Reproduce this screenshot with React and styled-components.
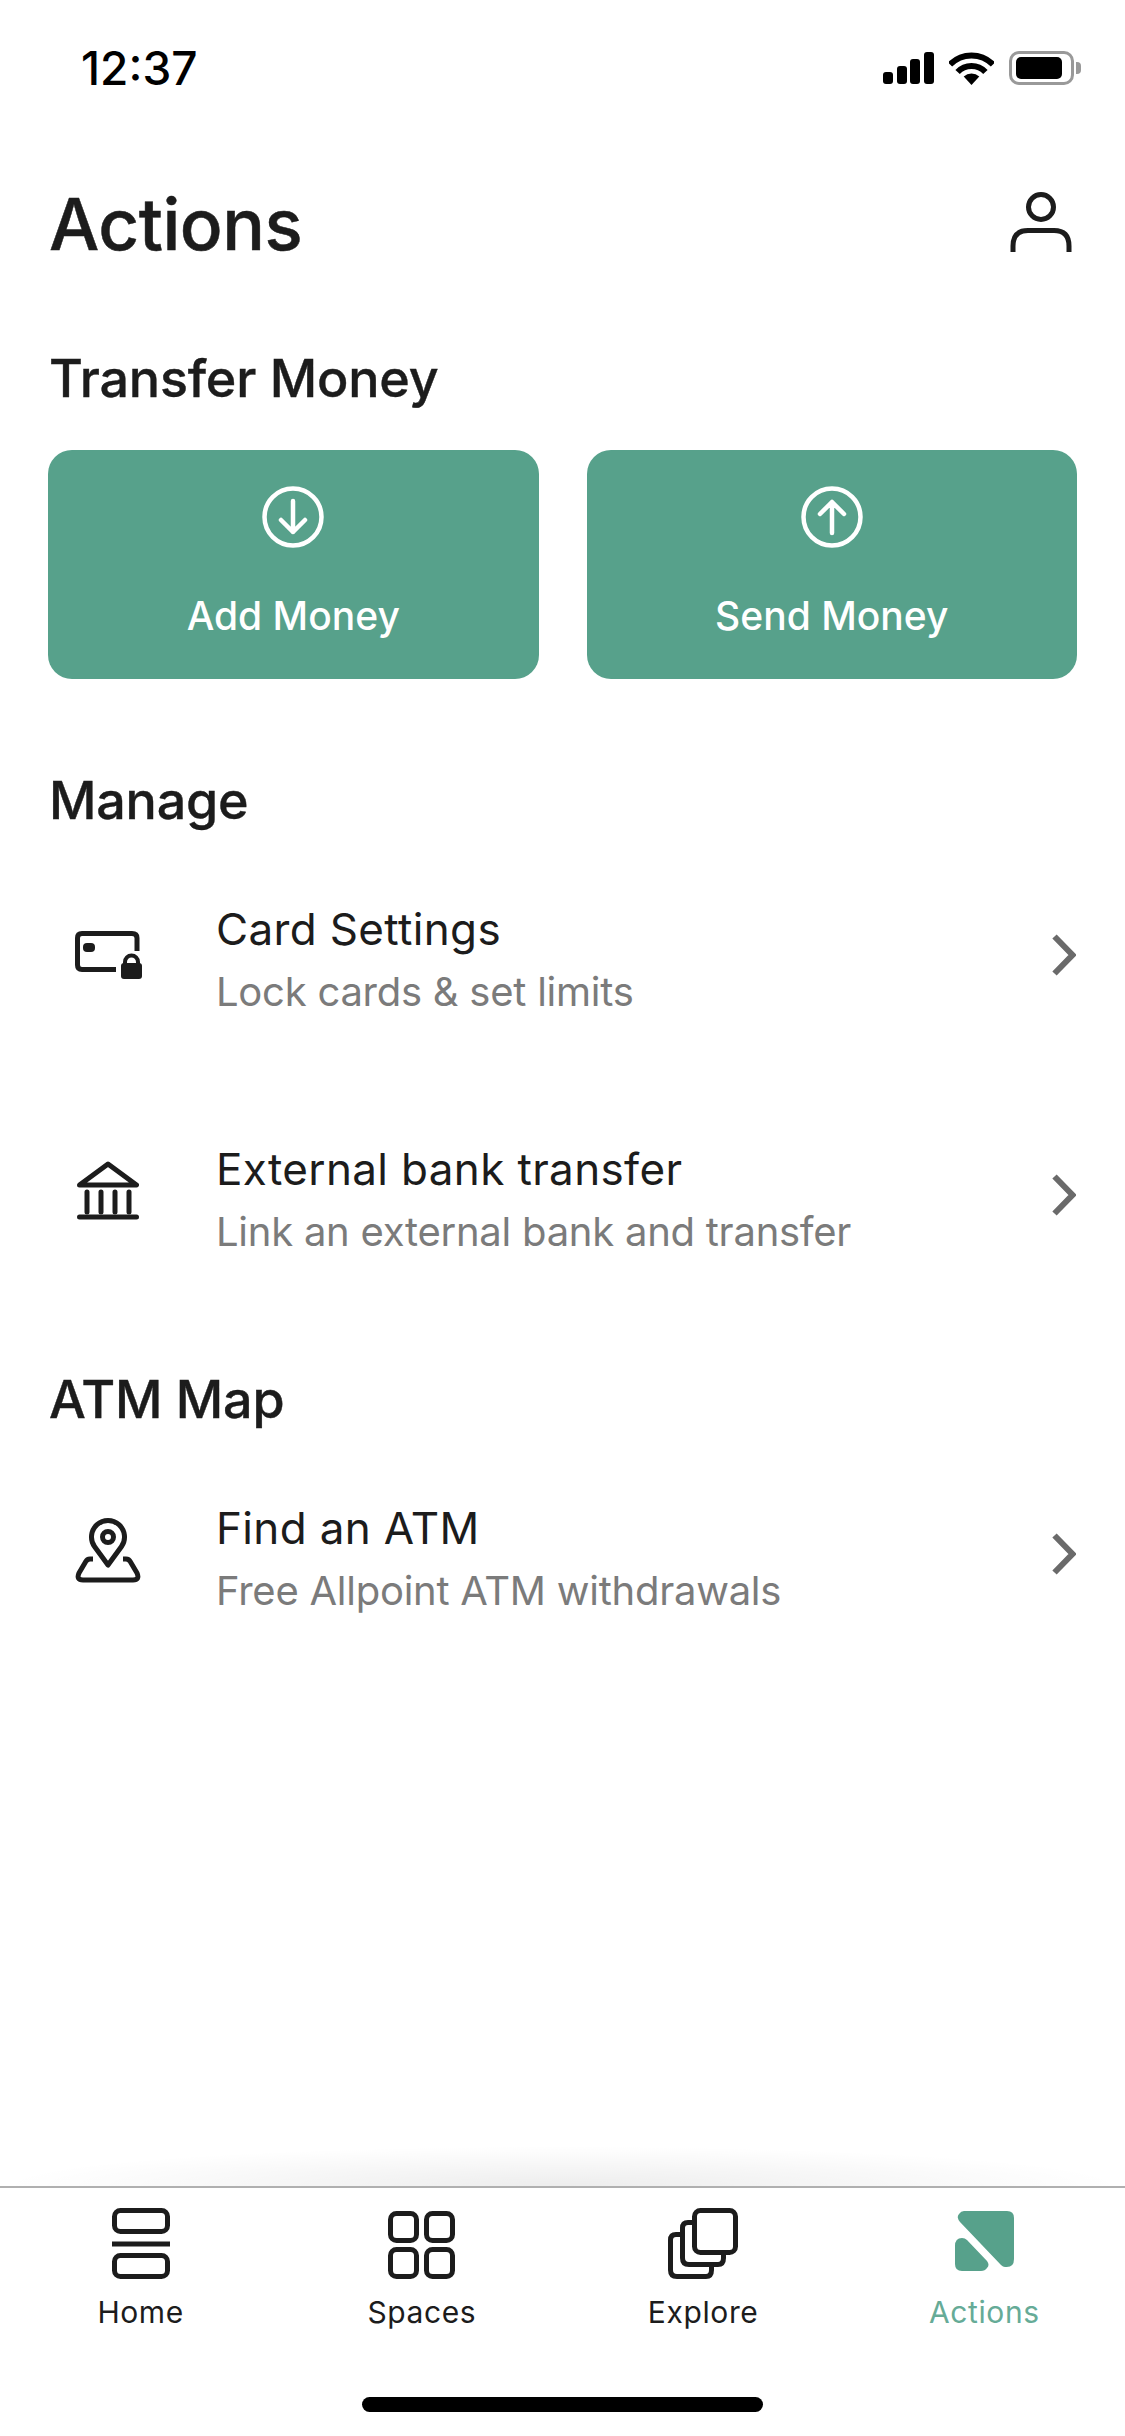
import React from 'react';
import styled, { createGlobalStyle } from 'styled-components';

const GlobalStyle = createGlobalStyle`
  html, body {
    margin: 0;
    padding: 0;
    background: #fff;
  }
  * {
    box-sizing: border-box;
  }
`;

const GREEN = '#57a18b';
const INK = '#1c1c1c';

const Screen = styled.div`
  width: 1125px;
  height: 2436px;
  display: flex;
  flex-direction: column;
  background: #fff;
  color: ${INK};
  font-family: Inter, "Noto Sans", sans-serif;
  overflow: hidden;
`;

const StatusBar = styled.div`
  height: 136px;
  flex-shrink: 0;
  display: flex;
  align-items: center;
  justify-content: space-between;
  padding: 0 43px 0 81px;
`;

const Clock = styled.span`
  font-size: 46px;
  font-weight: 500;
  color: #000;
`;

const StatusIcons = styled.div`
  display: flex;
  align-items: center;
  gap: 15px;
`;

const Battery = styled.div`
  position: relative;
  width: 65px;
  height: 34px;
  padding: 3px 4px;
  border: 3px solid #999;
  border-radius: 10px;
  margin-right: 8px;

  &::before {
    content: '';
    display: block;
    width: 46px;
    height: 22px;
    background: #000;
    border-radius: 5px;
  }

  &::after {
    content: '';
    position: absolute;
    right: -10px;
    top: 8px;
    width: 5px;
    height: 12px;
    background: #999;
    border-radius: 0 4px 4px 0;
  }
`;

const TitleRow = styled.header`
  height: 176px;
  flex-shrink: 0;
  display: flex;
  align-items: center;
  justify-content: space-between;
  padding: 0 53px 0 49px;
`;

const Title = styled.h1`
  margin: 0;
  font-size: 71px;
  font-weight: 500;
  letter-spacing: -0.5px;
  -webkit-text-stroke: 0.5px ${INK};
`;

const ProfileSlot = styled.div`
  margin-bottom: 4px;
`;

const Main = styled.main`
  flex: 1;
  display: flex;
  flex-direction: column;
`;

const SectionHeading = styled.h2`
  margin: ${(p) => p.$top}px 0 ${(p) => p.$bottom}px;
  padding-left: 49px;
  height: 60px;
  line-height: 60px;
  font-size: 52px;
  font-weight: 500;
  letter-spacing: -0.2px;
  -webkit-text-stroke: 0.4px ${INK};
`;

const ButtonRow = styled.div`
  display: flex;
  gap: 48px;
  padding: 0 48px;
`;

const ActionButton = styled.button`
  flex: 1;
  height: 229px;
  display: flex;
  flex-direction: column;
  align-items: center;
  padding: 36px 0 0;
  border: 0;
  border-radius: 24px;
  background: ${GREEN};
  color: #fff;
  font-family: inherit;
`;

const ButtonLabel = styled.span`
  margin-top: 43px;
  line-height: 50px;
  font-size: 39px;
  font-weight: 500;
`;

const Row = styled.div`
  height: 240px;
  display: flex;
  align-items: center;
  padding: 0 49px 0 48px;
`;

const RowIcon = styled.div`
  width: 120px;
  margin-right: 48px;
  margin-bottom: ${(p) => p.$lift || 0}px;
  display: flex;
  justify-content: center;
  align-items: center;
`;

const RowText = styled.div`
  flex: 1;
  padding-top: 10px;
  display: flex;
  flex-direction: column;
  gap: 7px;
`;

const RowTitle = styled.span`
  line-height: 56px;
  font-size: 44px;
  font-weight: 400;
  letter-spacing: 0.35px;
`;

const RowSubtitle = styled.span`
  line-height: 56px;
  font-size: 40px;
  font-weight: 400;
  letter-spacing: -0.25px;
  color: #7b7b7b;
`;

const TabBar = styled.nav`
  position: relative;
  height: 250px;
  flex-shrink: 0;
  display: flex;
  flex-direction: column;
  align-items: center;
  border-top: 2px solid #b0b0b0;
  padding-top: 20px;
  background: #fff;

  &::before {
    content: '';
    position: absolute;
    left: 0;
    right: 0;
    top: -42px;
    height: 40px;
    background: radial-gradient(ellipse 50% 100% at 50% 100%, rgba(0, 0, 0, 0.07), rgba(0, 0, 0, 0));
  }
`;

const Tabs = styled.div`
  width: 100%;
  display: grid;
  grid-template-columns: repeat(4, 1fr);
`;

const Tab = styled.div`
  display: flex;
  flex-direction: column;
  align-items: center;
`;

const TabIcon = styled.div`
  height: 71px;
  display: flex;
  align-items: flex-end;
`;

const TabLabel = styled.span`
  margin-top: 13px;
  line-height: 40px;
  font-size: 30px;
  font-weight: 400;
  letter-spacing: 0.6px;
  color: ${(p) => (p.$active ? '#66ab97' : INK)};
`;

const HomeIndicator = styled.div`
  width: 401px;
  height: 15px;
  margin-top: 65px;
  border-radius: 8px;
  background: #000;
`;

const Stroke = styled.svg`
  display: block;
  fill: none;
  stroke: ${(p) => p.$color || INK};
  stroke-width: ${(p) => p.$weight || 5}px;
  stroke-linecap: round;
  stroke-linejoin: round;
`;

const SignalIcon = () => (
  <svg width="51" height="32" viewBox="0 0 51 32" fill="#000">
    <rect x="0" y="20" width="10" height="12" rx="3" />
    <rect x="14" y="14" width="10" height="18" rx="3" />
    <rect x="27" y="7" width="10" height="25" rx="3" />
    <rect x="41" y="0" width="10" height="32" rx="3" />
  </svg>
);

const WifiIcon = () => (
  <svg width="45" height="33" viewBox="0 0 45 33" fill="none" stroke="#000" strokeWidth="6">
    <path d="M1 12.5A30 30 0 0 1 44 12.5" />
    <path d="M8.6 20A19 19 0 0 1 36.4 20" />
    <path d="M22.5 33L14.7 24.6A11.5 11.5 0 0 1 30.3 24.6Z" fill="#000" stroke="none" />
  </svg>
);

const ProfileIcon = () => (
  <Stroke width="62" height="60" viewBox="0 0 62 60" style={{ strokeLinecap: 'butt' }}>
    <circle cx="31" cy="15" r="12.5" />
    <path d="M3 60V54Q3 38.5 18 38.5H44Q59 38.5 59 54V60" />
  </Stroke>
);

const CircleArrow = ({ up }) => (
  <Stroke $color="#fff" $weight={4.5} width="62" height="62" viewBox="0 0 62 62">
    <circle cx="31" cy="31" r="28.5" />
    {up ? (
      <path d="M31 47V16M19 28L31 16L43 28" />
    ) : (
      <path d="M31 15V46M19 34L31 46L43 34" />
    )}
  </Stroke>
);

const CardLockIcon = () => (
  <Stroke width="67" height="48" viewBox="0 0 67 48">
    <path d="M62 20V7Q62 2.5 57 2.5H7Q2.5 2.5 2.5 7V34Q2.5 38.5 7 38.5H41" style={{ strokeLinecap: 'butt' }} />
    <rect x="8" y="12" width="12" height="9" rx="4" fill={INK} stroke="none" />
    <rect x="46" y="32" width="21" height="16" rx="3" fill={INK} stroke="none" />
    <path d="M50 33V31A6.5 6.5 0 0 1 63 31V33" strokeWidth="4" />
  </Stroke>
);

const BankIcon = () => (
  <Stroke width="62" height="60" viewBox="0 0 62 60">
    <path d="M2.5 24L31 3L59.5 24Z" />
    <path d="M10 31V51M24 31V51M38 31V51M52 31V51" />
    <path d="M2.5 56H59.5" />
  </Stroke>
);

const MapPinIcon = () => (
  <Stroke width="66" height="65" viewBox="0 0 66 65">
    <path d="M33 47L19.5 28.5A16.5 16.5 0 1 1 46.5 28.5Z" />
    <circle cx="33" cy="19" r="5.5" />
    <path d="M18 41H15Q12 41 10.5 44L4 55Q1 62 8 62H58Q65 62 62 55L55.5 44Q54 41 51 41H48" style={{ strokeLinecap: 'butt' }} />
  </Stroke>
);

const Chevron = () => (
  <Stroke $color="#6a6a6a" $weight={6} width="24" height="42" viewBox="0 0 24 42" style={{ strokeLinecap: 'butt', strokeLinejoin: 'miter' }}>
    <path d="M2.5 2.5L20.5 21L2.5 39.5" />
  </Stroke>
);

const HomeTabIcon = () => (
  <Stroke width="58" height="71" viewBox="0 0 58 71">
    <rect x="2.5" y="2.5" width="53" height="21" rx="6" />
    <path d="M0 36H58" style={{ strokeLinecap: 'butt' }} />
    <rect x="2.5" y="47.5" width="53" height="21" rx="6" />
  </Stroke>
);

const SpacesTabIcon = () => (
  <Stroke width="67" height="68" viewBox="0 0 67 68">
    <rect x="2.5" y="2.5" width="26" height="27" rx="6" />
    <rect x="38.5" y="2.5" width="26" height="27" rx="6" />
    <rect x="2.5" y="38.5" width="26" height="27" rx="6" />
    <rect x="38.5" y="38.5" width="26" height="27" rx="6" />
  </Stroke>
);

const ExploreTabIcon = () => (
  <Stroke width="70" height="71" viewBox="0 0 70 71">
    <rect x="26.5" y="2.5" width="41" height="42" rx="6" />
    <path d="M26 14.5H20Q14.5 14.5 14.5 20V50Q14.5 56.5 21 56.5H50Q55.5 56.5 55.5 50V45" />
    <path d="M14 26.5H8Q2.5 26.5 2.5 32V62Q2.5 68.5 9 68.5H38Q43.5 68.5 43.5 62V57" />
  </Stroke>
);

const ActionsTabIcon = () => (
  <svg width="59" height="68" viewBox="0 0 59 68" fill={GREEN} style={{ display: 'block' }}>
    <path d="M9 0H52Q59 0 59 7V48Q59 57 50 56Q48 56 46 54L5 11Q1 6 4 3Q6 0 9 0Z" />
    <path d="M0 35Q0 27 7 27Q10 27 12 29L32 50Q35 54 32 57Q30 60 26 60H7Q0 60 0 53Z" />
  </svg>
);

const tabs = [
  { label: 'Home', Icon: HomeTabIcon },
  { label: 'Spaces', Icon: SpacesTabIcon },
  { label: 'Explore', Icon: ExploreTabIcon },
  { label: 'Actions', Icon: ActionsTabIcon, active: true },
];

const ListRow = ({ icon, lift, title, subtitle }) => (
  <Row>
    <RowIcon $lift={lift}>{icon}</RowIcon>
    <RowText>
      <RowTitle>{title}</RowTitle>
      <RowSubtitle>{subtitle}</RowSubtitle>
    </RowText>
    <Chevron />
  </Row>
);

const App = () => (
  <Screen>
    <GlobalStyle />
    <StatusBar>
      <Clock>12:37</Clock>
      <StatusIcons>
        <SignalIcon />
        <WifiIcon />
        <Battery />
      </StatusIcons>
    </StatusBar>
    <TitleRow>
      <Title>Actions</Title>
      <ProfileSlot><ProfileIcon /></ProfileSlot>
    </TitleRow>
    <Main>
      <SectionHeading $top={37} $bottom={41}>Transfer Money</SectionHeading>
      <ButtonRow>
        <ActionButton>
          <CircleArrow />
          <ButtonLabel>Add Money</ButtonLabel>
        </ActionButton>
        <ActionButton>
          <CircleArrow up />
          <ButtonLabel>Send Money</ButtonLabel>
        </ActionButton>
      </ButtonRow>
      <SectionHeading $top={92} $bottom={4}>Manage</SectionHeading>
      <ListRow icon={<CardLockIcon />} title="Card Settings" subtitle="Lock cards & set limits" />
      <ListRow icon={<BankIcon />} lift={8} title="External bank transfer" subtitle="Link an external bank and transfer" />
      <SectionHeading $top={55} $bottom={4}>ATM Map</SectionHeading>
      <ListRow icon={<MapPinIcon />} lift={7} title="Find an ATM" subtitle="Free Allpoint ATM withdrawals" />
    </Main>
    <TabBar>
      <Tabs>
        {tabs.map(({ label, Icon, active }) => (
          <Tab key={label}>
            <TabIcon><Icon /></TabIcon>
            <TabLabel $active={active}>{label}</TabLabel>
          </Tab>
        ))}
      </Tabs>
      <HomeIndicator />
    </TabBar>
  </Screen>
);

export default App;
